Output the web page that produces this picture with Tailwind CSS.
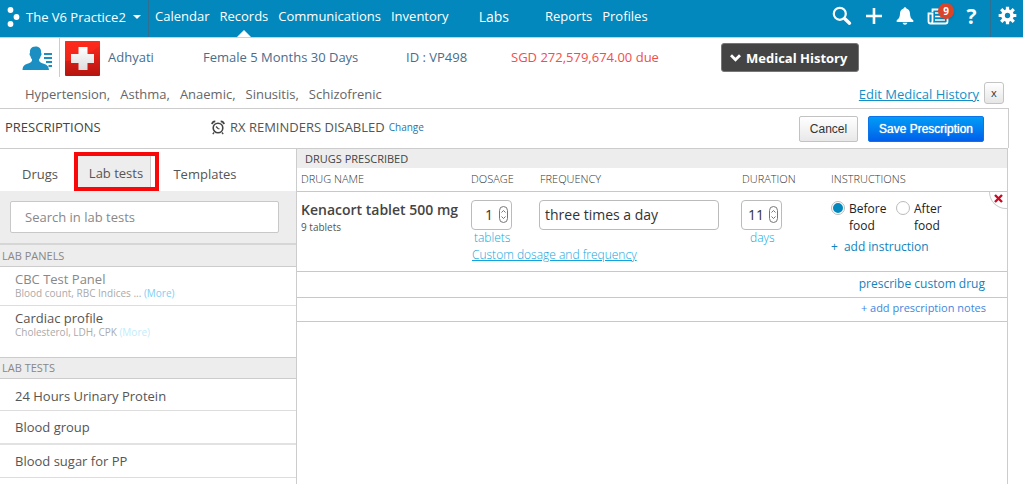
<!DOCTYPE html>
<html lang="en">
<head>
<meta charset="utf-8">
<meta name="viewport" content="width=device-width, initial-scale=1">
<title>Prescriptions</title>
<script src="https://cdn.jsdelivr.net/npm/@tailwindcss/browser@4"></script>
</head>
<body class="min-h-screen flex flex-col bg-white font-['Open_Sans',sans-serif] text-[13px] leading-5 text-[#555]">

<header class="flex h-[38px] shrink-0 border-b border-[#a9dcef] bg-[#0288bc] font-medium text-white">
  <button type="button" class="flex w-[149px] items-center border-r border-[#2f6f92] pb-1 pl-[7px] whitespace-nowrap">
    <svg class="mr-[5px] h-5 w-[14px]" viewBox="0 0 14 20" fill="currentColor" aria-hidden="true"><circle cx="3.5" cy="3" r="2.9"/><circle cx="9.5" cy="10" r="2.9"/><circle cx="3.5" cy="17" r="2.9"/></svg>
    The V6 Practice2
    <svg class="ml-[7px] h-1 w-2" viewBox="0 0 8 4" fill="currentColor" aria-hidden="true"><path d="M0 0h8L4 4z"/></svg>
  </button>
  <nav class="flex pl-[6px]" aria-label="Main">
    <a href="#" class="pt-[6px]">Calendar</a>
    <a href="#" class="relative ml-[10px] pt-[6px]">Records
      <svg class="absolute bottom-0 left-1/2 h-[7px] w-[14px] -translate-x-1/2" viewBox="0 0 14 7" fill="#fff" aria-hidden="true"><path d="M7 0l7 7H0z"/></svg>
    </a>
    <a href="#" class="ml-[10px] pt-[6px]">Communications</a>
    <a href="#" class="ml-[10px] pt-[6px]">Inventory</a>
    <a href="#" class="ml-[30px] pt-[7px] text-sm">Labs</a>
    <a href="#" class="ml-[36px] pt-[6px]">Reports</a>
    <a href="#" class="ml-[10px] pt-[6px]">Profiles</a>
  </nav>
  <div class="ml-auto flex items-center">
    <button type="button" aria-label="Search" class="mb-[6px]">
      <svg class="h-5 w-5" viewBox="0 0 20 20" fill="none" stroke="currentColor"><circle cx="7.800" cy="7.800" r="6" stroke-width="2.200"/><path d="M12.800 12.800l4.700 4.400" stroke-width="3.400" stroke-linecap="round"/></svg>
    </button>
    <button type="button" aria-label="Add" class="mb-[5px] ml-[13px]">
      <svg class="h-5 w-[18px]" viewBox="0 0 18 20" fill="none" stroke="currentColor" stroke-width="2.600"><path d="M9 2v16M1 10h16"/></svg>
    </button>
    <button type="button" aria-label="Alerts" class="mb-[5px] ml-[13px]">
      <svg class="h-5 w-[18px]" viewBox="0 0 18 20" fill="currentColor"><path d="M9 1.200c.9 0 1.300.6 1.400 1.400 2.300.6 3.500 2.500 3.600 5 .1 3.600 1 5.300 3.300 6.600v1.700H.7v-1.700C3 12.900 3.900 11.200 4 7.600c.1-2.500 1.300-4.400 3.600-5C7.700 1.800 8.100 1.200 9 1.200zM6.600 16.800h4.800c-.3 1.300-1.200 2-2.400 2s-2.100-.7-2.400-2z"/></svg>
    </button>
    <button type="button" aria-label="News, 9 unread" class="relative mb-[5px] ml-[13px]">
      <svg class="h-5 w-[22px]" viewBox="0 0 22 20" fill="none" stroke="currentColor" stroke-width="1.800"><path d="M5.500 6V3.500H20.500V15.500q0 2-2 2H3.500q-2 0-2-2V7.500H5.500V15q0 2-1.500 2.500"/><path d="M8 7h10M8 10.500h10M8 14h10" stroke-width="1.500"/></svg>
      <span class="absolute -top-[3px] left-[11px] flex size-4 items-center justify-center rounded-full bg-[#d9442a] text-[10px] leading-none font-bold shadow-sm">9</span>
    </button>
    <button type="button" aria-label="Help" class="mb-[6px] ml-[17px] w-[11px] text-[21px] leading-6 font-bold">?</button>
    <button type="button" aria-label="Settings" class="ml-[13px] flex h-full w-[33px] items-center border-l border-[#2f6f92] pb-[6px] pl-[7px]">
      <svg class="h-[19px] w-[19px]" viewBox="-10 -10 20 20" fill="none" stroke="currentColor"><circle r="4.700" stroke-width="3.800"/><g stroke-width="3.400"><path d="M0-9.300v3.500M0 9.300V5.800M-9.300 0h3.500M9.300 0H5.800M-6.600-6.600l2.500 2.500M6.600 6.600L4.100 4.100M-6.600 6.600l2.500-2.500M6.600-6.600L4.100-4.100"/></g></svg>
    </button>
  </div>
</header>

<section class="flex h-10 items-start pl-[22px] text-[#4a6d8c]" aria-label="Patient">
  <svg class="mt-2 h-6 w-[31px] shrink-0" viewBox="0 0 31 24" fill="#1b8fc2" aria-hidden="true"><path d="M13.500.5c4 0 6 2.500 5.600 6.600.8.3.6 2.200-.4 3-.3 1.600-.8 2.600-1.700 3.500.1 2 .8 2.900 3.200 3.600 4.400 1.200 6.300 2.300 6.800 6.800H.5c.4-4.500 2-5.600 6.400-6.800 2.400-.7 3.100-1.600 3.200-3.600-.9-.9-1.400-1.900-1.700-3.500-1-.8-1.200-2.700-.4-3C7.600 3.500 9 .5 13.500.5zM22 7h8v2h-8zM22 11h8v2h-8zM24 15h6v2h-6zM26.500 19H30v2h-3.500z"/></svg>
  <div class="ml-[6px] h-[39px] w-px shrink-0 bg-[#ccc]"></div>
  <svg class="mt-[3px] ml-[5px] size-[35px] shrink-0" viewBox="0 0 35 35" aria-hidden="true">
    <defs><linearGradient id="red" x2="0" y2="1"><stop stop-color="#ff2a1c"/><stop offset="1" stop-color="#b51510"/></linearGradient><linearGradient id="cross" x2="0" y2="1"><stop stop-color="#fff"/><stop offset="1" stop-color="#ddd"/></linearGradient></defs>
    <rect width="35" height="35" rx="1" fill="url(#red)"/><path d="M0 20C14 19 25 13 35 4V0H0z" fill="#ff2a1c" opacity=".6"/><path d="M13.500 6h9v7H29v9h-6.500v7h-9v-7H6v-9h7.500z" fill="url(#cross)"/>
  </svg>
  <span class="mt-[9px] ml-2 w-[95px]">Adhyati</span>
  <span class="mt-[9px] w-[203px] whitespace-nowrap">Female 5 Months 30 Days</span>
  <span class="mt-[9px] w-[105px] whitespace-nowrap">ID : VP498</span>
  <span class="mt-[9px] w-[210px] whitespace-nowrap text-[#f04e4e]">SGD 272,579,674.00 due</span>
  <button type="button" class="mt-[5px] flex h-[29px] w-[138px] shrink-0 items-center rounded-[3px] border border-[#777] bg-[#444] pl-2 text-[13px] font-bold whitespace-nowrap text-white">
    <svg class="mr-[5px] h-2 w-[11px]" viewBox="0 0 11 8" fill="none" stroke="currentColor" stroke-width="2.800" aria-hidden="true"><path d="M1 1.300l4.500 4.500L10 1.300"/></svg>Medical History
  </button>
</section>

<section class="flex h-[30px] items-start pt-[6px] pl-[25px] text-[#666]" aria-label="Medical history">
  <ul class="flex gap-[10px]"><li>Hypertension,</li><li>Asthma,</li><li>Anaemic,</li><li>Sinusitis,</li><li>Schizofrenic</li></ul>
  <a href="#" class="ml-auto text-[#1190c8] underline">Edit Medical History</a>
  <button type="button" aria-label="Close" class="-mt-[2px] mr-[19px] ml-[5px] flex h-[22px] w-5 items-center justify-center rounded-[3px] border border-[#c4c4c4] bg-linear-to-b from-white to-[#e6e6e6] pb-px text-[11px] text-[#333]">x</button>
</section>

<section class="mr-[14px] flex h-10 shrink-0 items-start border-t border-r border-[#ccc] pl-[5px]">
  <h1 class="mt-2 w-[206px] text-[#444]">PRESCRIPTIONS</h1>
  <svg class="mt-[11px] h-[15px] w-[14px]" viewBox="0 0 14 15" fill="none" stroke="#444" aria-hidden="true"><circle cx="7" cy="8" r="4.800" stroke-width="1.600"/><path d="M5 6.500l2 2 1.500.5M3 12.500l-1.200 1.600M11 12.500l1.200 1.600" stroke-width="1.300"/><path d="M1 4.200Q1.300 1.500 4.300 1.300M13 4.200Q12.700 1.500 9.700 1.300" stroke-width="1.800"/></svg>
  <span class="mt-2 ml-[5px] whitespace-nowrap text-[#555]">RX REMINDERS DISABLED</span>
  <a href="#" class="mt-2 ml-1 text-[10px] text-[#2577ad]">Change</a>
  <div class="mt-[7px] mr-6 ml-auto flex gap-[10px] font-['Liberation_Sans',sans-serif] text-xs">
    <button type="button" class="h-[26px] w-[59px] rounded-[2px] border border-[#c2c2c2] bg-linear-to-b from-white to-[#e8e8e8] text-[#333]">Cancel</button>
    <button type="button" class="h-[26px] w-[116px] rounded-[2px] border border-[#0a74e8] bg-linear-to-b from-[#049cf5] to-[#045eea] whitespace-nowrap text-white text-shadow-[0_0_1px_#fff]">Save Prescription</button>
  </div>
</section>

<main class="mr-[15px] flex flex-1 border-t border-r border-[#ccc]">
  <aside class="w-[297px] shrink-0 border-r border-[#ccc]">
    <div class="flex h-[42px] items-end" role="tablist">
      <button type="button" role="tab" class="h-[35px] w-[74px] pt-px pl-[6px]">Drugs</button>
      <button type="button" role="tab" aria-selected="true" class="h-[39px] w-[85px] border-4 border-[#f80808] pr-1"><span class="flex h-full items-center justify-center border-r border-[#ccc] bg-[#ededed] pt-[7px] pb-1 pl-1">Lab tests</span></button>
      <button type="button" role="tab" class="h-[35px] w-[92px] pt-px">Templates</button>
    </div>
    <div class="h-[54px] border-b-2 border-[#d6d6d6] bg-[#ededed] pt-[10px] pr-[17px] pl-[10px]">
      <input type="search" aria-label="Search in lab tests" placeholder="Search in lab tests" class="h-8 w-full rounded-[2px] border border-[#c8c8c8] bg-white px-[14px] placeholder:text-[#888]">
    </div>
    <h2 class="h-[22px] border-b border-[#ccc] bg-[#ededed] pl-[2px] text-[11px] leading-[22px] text-[#888]">LAB PANELS</h2>
    <ul>
      <li class="h-[39px] border-b border-[#ddd] pt-1 pl-[15px]"><p class="leading-4 text-[#888]">CBC Test Panel</p><p class="text-[10px] leading-3 text-[#aaa]">Blood count, RBC Indices ... <a href="#" class="text-[#7dcff5]">(More)</a></p></li>
      <li class="h-[51px] pt-1 pl-[15px]"><p class="leading-4 text-[#555]">Cardiac profile</p><p class="text-[10px] leading-3 text-[#aaa]">Cholesterol, LDH, CPK <a href="#" class="text-[#c2ecfb]">(More)</a></p></li>
    </ul>
    <h2 class="h-[22px] border-y border-[#ccc] bg-[#ededed] pl-[2px] text-[11px] leading-5 text-[#888]">LAB TESTS</h2>
    <ul>
      <li class="h-8 border-b border-[#ddd] pt-[7px] pl-[15px]">24 Hours Urinary Protein</li>
      <li class="h-[34px] border-b-2 border-[#e2e2e2] pt-[6px] pl-[15px]">Blood group</li>
      <li class="h-[33px] border-b border-[#ddd] pt-[6px] pl-[15px]">Blood sugar for PP</li>
    </ul>
  </aside>

  <section class="min-w-0 flex-1">
    <h2 class="h-[19px] bg-[#ededed] pl-2 text-[11px] leading-5 text-[#444]">DRUGS PRESCRIBED</h2>
    <table class="w-full table-fixed text-left">
      <thead>
        <tr class="h-[23px] border-b border-[#c8c8c8] text-[11px] text-[#333]">
          <th class="w-[174px] pl-1 font-light">DRUG NAME</th>
          <th class="w-[69px] font-light">DOSAGE</th>
          <th class="font-light">FREQUENCY</th>
          <th class="w-[89px] font-light">DURATION</th>
          <th class="w-[176px] font-light">INSTRUCTIONS</th>
        </tr>
      </thead>
      <tbody>
        <tr class="h-[80px] border-b border-[#c8c8c8] align-top">
          <td class="pt-2 pl-1"><p class="text-sm font-semibold whitespace-nowrap text-[#444]">Kenacort tablet 500 mg</p><p class="text-[10px] leading-[14px]">9 tablets</p></td>
          <td class="pt-2 text-xs">
            <div class="flex h-[30px] w-[41px] items-center rounded-[4px] border border-[#bbb] pr-[3px] text-sm text-[#333]">
              <input type="text" inputmode="numeric" aria-label="Dosage" value="1" class="w-[22px] min-w-0 flex-1 pr-[6px] text-right">
              <svg class="h-[17px] w-[9px]" viewBox="0 0 9 17" fill="none" stroke="#777" aria-hidden="true"><rect x=".5" y=".5" width="8" height="16" rx="4"/><path d="M2.500 6.500l2-2 2 2M2.500 10.500l2 2 2-2"/></svg>
            </div>
            <p class="pl-[3px] leading-[15px] font-light text-[#12a5dd]">tablets</p>
            <a href="#" class="block pt-[2px] pl-px font-light whitespace-nowrap text-[#12a5dd] underline">Custom dosage and frequency</a>
          </td>
          <td class="pt-2"><input type="text" aria-label="Frequency" value="three times a day" class="-ml-px block h-[30px] w-[calc(100%-22px)] rounded-[4px] border border-[#bbb] px-[5px] text-sm text-[#333]"></td>
          <td class="pt-2 text-xs">
            <div class="-ml-px flex h-[30px] w-[41px] items-center rounded-[4px] border border-[#bbb] pr-[3px] text-sm text-[#333]">
              <input type="text" inputmode="numeric" aria-label="Duration" value="11" class="w-[22px] min-w-0 flex-1 pr-[5px] text-right">
              <svg class="h-[17px] w-[9px]" viewBox="0 0 9 17" fill="none" stroke="#777" aria-hidden="true"><rect x=".5" y=".5" width="8" height="16" rx="4"/><path d="M2.500 6.500l2-2 2 2M2.500 10.500l2 2 2-2"/></svg>
            </div>
            <p class="pl-2 leading-[15px] font-light text-[#12a5dd]">days</p>
          </td>
          <td class="relative pt-2 text-xs leading-[17px] text-[#222]">
            <div class="flex">
              <label class="flex w-[65px] items-start gap-1"><input type="radio" name="food" checked class="mt-px size-[14px] shrink-0 appearance-none rounded-full border border-[#bbb] bg-white checked:border-2 checked:border-white checked:bg-[#0288bc] checked:outline checked:outline-[#bbb] checked:-outline-offset-1"><span>Before food</span></label>
              <label class="flex w-[55px] items-start gap-1"><input type="radio" name="food" class="mt-px size-[14px] shrink-0 appearance-none rounded-full border border-[#bbb] bg-white"><span>After food</span></label>
            </div>
            <button type="button" class="mt-1 flex gap-[6px] text-[#1283bd]"><span>+</span> add instruction</button>
            <button type="button" aria-label="Remove drug" class="absolute top-0 right-0 flex h-[17px] w-[18px] items-center justify-end rounded-bl-full border-b border-l border-[#ccc] pr-1 pb-[2px]"><svg class="size-[9px]" viewBox="0 0 9 9" stroke="#cc0a22" stroke-width="2.400" aria-hidden="true"><path d="M1 1l7 7M8 1L1 8"/></svg></button>
          </td>
        </tr>
      </tbody>
    </table>
    <div class="flex h-[26px] items-center justify-end border-b border-[#c8c8c8] pr-[22px]"><button type="button" class="text-xs text-[#1283bd]">prescribe custom drug</button></div>
    <div class="flex h-6 items-center justify-end border-b border-[#c8c8c8] pr-[21px]"><button type="button" class="pb-[2px] text-[11px] text-[#3f86dd]">+ add prescription notes</button></div>
  </section>
</main>
</body>
</html>
